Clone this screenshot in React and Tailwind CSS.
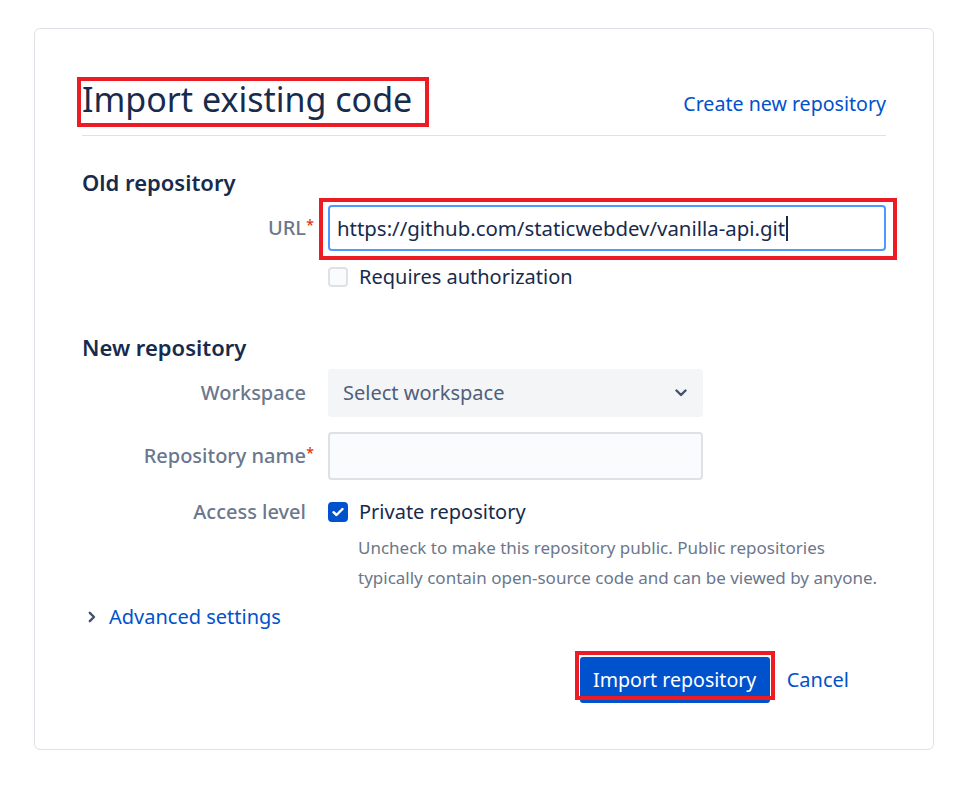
import { useState } from "react";

const FONT = { fontFamily: '"Noto Sans", "Open Sans", sans-serif' };

function Annotate({ className }) {
  return <span className={`pointer-events-none absolute border-4 border-[#ed1c24] ${className}`} />;
}

function FieldRow({ label, required, children, align = "center" }) {
  return (
    <div className={`flex ${align === "start" ? "items-start" : "items-center"}`}>
      <div className="w-[224px] shrink-0 text-right leading-[30px]">
        <span className="relative text-[20px] font-medium text-[#6b778c]">
          {label}
          {required && <span className="absolute -right-[8px] -top-[4px] text-[14px] text-[#de350b]">*</span>}
        </span>
      </div>
      <div className="ml-[22px] flex-1">{children}</div>
    </div>
  );
}

function Checkbox({ checked, onChange }) {
  return (
    <button
      type="button"
      onClick={onChange}
      className={`flex h-[20px] w-[20px] shrink-0 items-center justify-center rounded-[4px] border-2 ${
        checked ? "border-[#0052cc] bg-[#0052cc]" : "border-[#dfe1e6] bg-[#fafbfc]"
      }`}
    >
      {checked && (
        <svg width="12" height="10" viewBox="0 0 12 10" fill="none">
          <path d="M1.5 5.2 4.5 8 10.5 2" stroke="white" strokeWidth="2.4" strokeLinecap="round" strokeLinejoin="round" />
        </svg>
      )}
    </button>
  );
}

export default function App() {
  const [auth, setAuth] = useState(false);
  const [priv, setPriv] = useState(true);

  return (
    <div className="min-h-screen bg-white pt-[28px] pl-[34px] pr-[31px]" style={FONT}>
      <div className="h-[722px] rounded-[6px] border border-[#dfe1e6] px-[47px] pt-[50px] text-[#172b4d]">
        <div className="flex items-end justify-between border-b border-[#e1e1e1] pb-[16px]">
          <h1 className="relative text-[34px] leading-[40px] font-normal text-[#172b4d]">
            Import existing code
            <Annotate className="-left-[5px] -right-[17px] -top-[2px] -bottom-[8px]" />
          </h1>
          <a href="#" className="mb-[1px] text-[19.6px] text-[#0052cc]">Create new repository</a>
        </div>

        <h2 className="mt-[31px] text-[22px] font-semibold leading-[30px]">Old repository</h2>

        <div className="mt-[8px]">
          <FieldRow label="URL" required>
            <div className="relative">
              <input
                defaultValue="https://github.com/staticwebdev/vanilla-api.git"
                className="h-[46px] w-full rounded-[4px] border-2 border-[#4c9aff] bg-white px-[7px] text-[20.4px] text-[#172b4d] outline-none"
              />
              <span className="pointer-events-none absolute left-[458px] top-[11px] h-[25px] w-[2px] bg-[#172b4d]" />
              <Annotate className="-left-[9px] -right-[11px] -top-[7px] -bottom-[9px]" />
            </div>
          </FieldRow>
          <div className="ml-[246px] mt-[11px] flex items-center gap-[11px]">
            <Checkbox checked={auth} onChange={() => setAuth(!auth)} />
            <span className="text-[20px] text-[#172b4d]">Requires authorization</span>
          </div>
        </div>

        <h2 className="mt-[40px] text-[22px] font-semibold leading-[30px]">New repository</h2>

        <div className="mt-[7px] flex flex-col gap-[15px]">
          <FieldRow label="Workspace">
            <div className="flex h-[48px] w-[375px] items-center justify-between rounded-[4px] bg-[#f4f5f7] pl-[15px] pr-[16px]">
              <span className="text-[20px] text-[#505f79]">Select workspace</span>
              <svg width="12" height="8" viewBox="0 0 12 8" fill="none">
                <path d="M1.5 1.5 6 6l4.5-4.5" stroke="#42526e" strokeWidth="2.4" strokeLinecap="round" strokeLinejoin="round" />
              </svg>
            </div>
          </FieldRow>
          <FieldRow label="Repository name" required>
            <input className="h-[48px] w-[375px] rounded-[4px] border-2 border-[#dfe1e6] bg-[#fafbfc] px-[8px] text-[20px] outline-none" />
          </FieldRow>
          <div className="mt-[2px]">
            <FieldRow label="Access level" align="start">
              <div className="flex h-[30px] items-center gap-[11px]">
                <Checkbox checked={priv} onChange={() => setPriv(!priv)} />
                <span className="text-[20px] text-[#172b4d]">Private repository</span>
              </div>
              <p className="mt-[6px] ml-[30px] text-[17px] leading-[30px] text-[#6b778c]">
                Uncheck to make this repository public. Public repositories
                <br />
                typically contain open-source code and can be viewed by anyone.
              </p>
            </FieldRow>
          </div>
        </div>

        <button type="button" className="mt-[9px] ml-[6px] flex items-center gap-[13px] text-[20px] leading-[30px] text-[#0052cc]">
          <svg width="8" height="12" viewBox="0 0 8 12" fill="none">
            <path d="M1.8 1.8 6 6l-4.2 4.2" stroke="#42526e" strokeWidth="2.4" strokeLinecap="round" strokeLinejoin="round" />
          </svg>
          Advanced settings
        </button>

        <div className="mt-[25px] flex items-center justify-end gap-[17px] pr-[37px]">
          <button type="button" className="relative h-[46px] w-[190px] rounded-[3px] bg-[#0052cc] text-[19.6px] text-white">
            Import repository
            <Annotate className="-left-[5px] -right-[5px] -top-[6px] bottom-[3px]" />
          </button>
          <a href="#" className="text-[20px] text-[#0052cc]">Cancel</a>
        </div>
      </div>
    </div>
  );
}
